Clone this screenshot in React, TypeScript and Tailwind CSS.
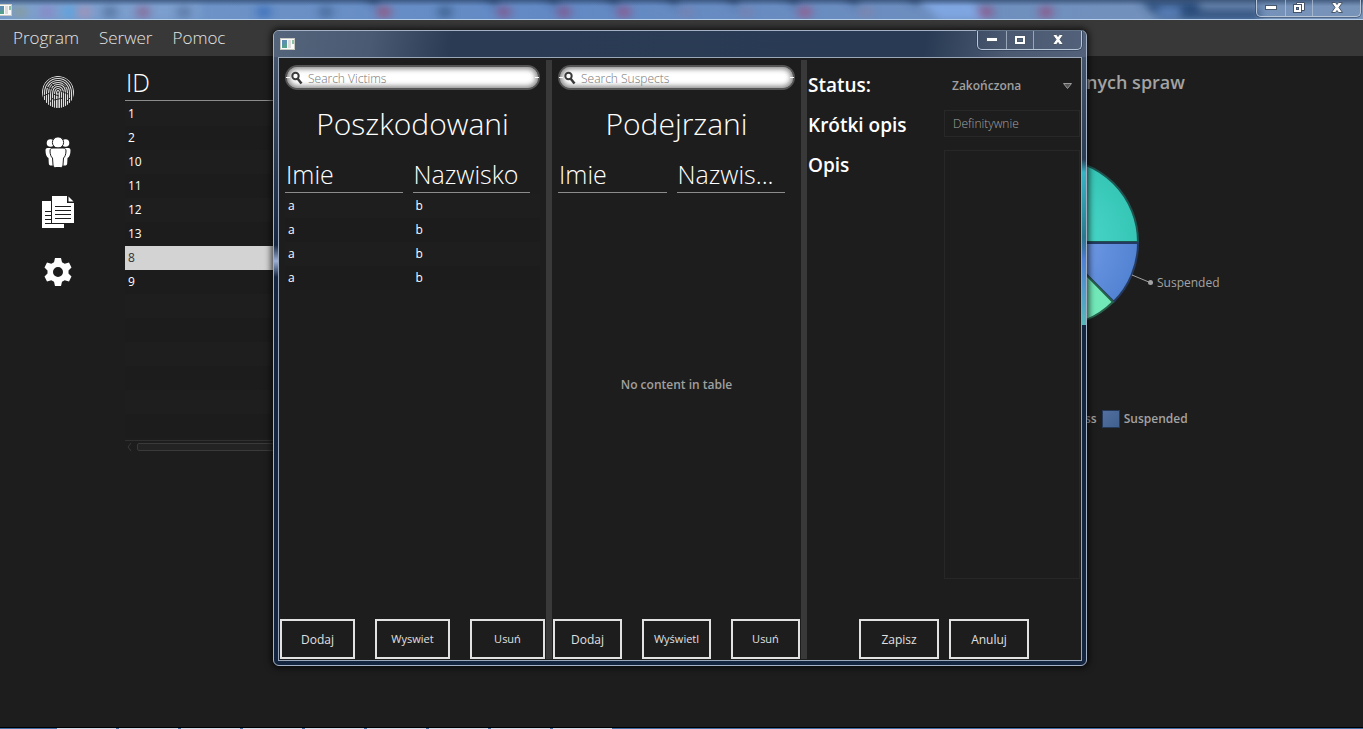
import type { ReactNode } from 'react';

const caseIds = ['1', '2', '10', '11', '12', '13', '8', '9', '', '', '', '', '', ''];
const victims = [
  ['a', 'b'],
  ['a', 'b'],
  ['a', 'b'],
  ['a', 'b'],
];
const tabBlurs = [
  { x: 20, c: '#8a9a8a' }, { x: 47, c: '#8f7fc4' }, { x: 70, c: '#4fa5e6' }, { x: 84, c: '#b08fae' },
  { x: 110, c: '#4c6691' }, { x: 143, c: '#8c5a86' }, { x: 184, c: '#4f6a96' }, { x: 264, c: '#2f66b8' },
  { x: 326, c: '#3f608e' }, { x: 384, c: '#a2466c' }, { x: 445, c: '#31557f' }, { x: 504, c: '#8c4b80' },
  { x: 564, c: '#8c4b80' }, { x: 624, c: '#964b80' }, { x: 686, c: '#7b80ac' }, { x: 746, c: '#7b80ac' },
  { x: 805, c: '#a0507f' }, { x: 866, c: '#8583a8' }, { x: 986, c: '#96477a' }, { x: 1046, c: '#96477a' },
];
const tabEdges = [370, 490, 550, 610, 670, 730, 790, 850, 912];

function AppIcon() {
  return (
    <svg width="15" height="12" viewBox="0 0 15 12" aria-hidden="true">
      <rect x="0.5" y="0.5" width="14" height="11" fill="#fafafa" stroke="#c9c9c4" />
      <rect x="2" y="2" width="5" height="8" fill="#55a08d" />
      <path d="M2 2h5v3L2 8z" fill="#5c8fb0" />
      <rect x="8" y="2" width="3" height="8" fill="#dcdcdc" />
      <rect x="12" y="2" width="2" height="4" fill="#8fc0a8" />
    </svg>
  );
}

function CaptionButtons({ restore }: { restore: boolean }) {
  const base = 'flex items-center justify-center pb-px border-[#b9c6d8]/70 hover:bg-white/20';
  return (
    <div className="flex h-full overflow-hidden rounded-b-[5px] border border-t-0 border-[#b9c6d8] shadow-[0_0_0_1px_#26374f80]">
      <button aria-label="Minimize" className={base + ' w-[29px] border-r'}>
        <svg width="12" height="5" viewBox="0 0 12 5"><rect x="0.5" y="0.5" width="11" height="4" fill="#fff" stroke="#4a586b" /></svg>
      </button>
      <button aria-label={restore ? 'Restore' : 'Maximize'} className={base + ' w-[27px] border-r'}>
        {restore ? (
          <svg width="12" height="12" viewBox="0 0 12 12">
            <path d="M3.500 0.500h8v8h-3v-6h-5z" fill="#fff" stroke="#45536a" />
            <rect x="0.500" y="2.500" width="8" height="8" fill="#fff" stroke="#45536a" />
            <rect x="3.500" y="5.500" width="2" height="2" fill="#7189ac" stroke="#45536a" />
          </svg>
        ) : (
          <svg width="12" height="10" viewBox="0 0 12 10">
            <rect x="0.5" y="0.5" width="11" height="9" fill="#fff" stroke="#4a586b" />
            <rect x="3.5" y="3.5" width="5" height="3" fill="#56667c" stroke="#4a586b" />
          </svg>
        )}
      </button>
      <button aria-label="Close" className={base + ' w-[47px]'}>
        <svg width="12" height="11" viewBox="0 0 12 11">
          <path d="M0.5 0.5h4L6 2.5l1.500-2h4L8 5.500l3.500 5h-4L6 8.500l-1.500 2h-4L4 5.500z" fill="#fff" stroke="#4a586b" />
        </svg>
      </button>
    </div>
  );
}

function FingerprintIcon() {
  return (
    <svg width="34" height="34" viewBox="0 0 34 34" fill="none" stroke="#dcdcdc" strokeWidth="1.1" aria-hidden="true">
      <defs><clipPath id="finger"><circle cx="17" cy="17" r="16" /></clipPath></defs>
      <g clipPath="url(#finger)">
        <path d="M17 1.500C8 1.500 1.500 8 1.500 17v6M17 1.500C26 1.500 32.500 8 32.500 17v6" />
        <path d="M3.500 25v-7C3.500 10 9 3.500 17 3.500S30.500 10 30.500 18v8" />
        <path d="M5.500 28V18C5.500 11 10 5.500 17 5.500S28.500 11 28.500 18v10" />
        <path d="M7.500 30V19C7.500 12 11 7.500 17 7.500S26.500 12 26.500 18v12" />
        <path d="M9.500 32V20C9.500 13 12 9.500 17 9.500S24.500 13 24.500 18v14" />
        <path d="M11.500 33V20c0-5 2-8.500 5.500-8.500s5.500 3 5.500 7.500v14" />
        <path d="M13.500 33V20c0-4 1-6.500 3.500-6.500s3.500 2 3.500 5.500v14" />
        <path d="M15.500 33V19c0-2 .5-3.500 1.500-3.500s1.500 1 1.500 3.500v14" />
        <path d="M17 18v15" />
      </g>
      <path d="M2 21l7-3M8 28l4-5M20 16l7 3M13 25l9-2M25 27l5-5M5 12l6 2M22 8l3 4M10 8l3 3M12 19l6 2" stroke="#1d1d1d" strokeWidth="0.9" />
    </svg>
  );
}

function PeopleIcon() {
  return (
    <svg width="26" height="31" viewBox="0 0 26 31" fill="#fff" aria-hidden="true">
      <circle cx="5.500" cy="6" r="3.800" />
      <circle cx="20.500" cy="6" r="3.800" />
      <path d="M2.500 11h7v17.500H6.500c-2 0-2.500-.5-2.700-2L3.500 21C1.500 20 .5 17 .5 13.500.5 12 1 11 2.500 11zM23.500 11h-7v17.500h3c2 0 2.500-.5 2.700-2l.3-5.500c2-1 3-4 3-7.500 0-1.500-.5-2.500-2-2.500z" />
      <g stroke="#1d1d1d">
        <circle cx="13" cy="5.500" r="5.600" />
        <path d="M8 11h10c2 0 3 1 3 3 0 3-1 6-2.500 7L18 28c-.3 2-1 2.500-2.500 2.500h-5C9 30.500 8.300 30 8 28l-.5-7C6 20 5 17 5 14c0-2 1-3 3-3z" />
      </g>
    </svg>
  );
}

function DocumentsIcon() {
  return (
    <svg width="32" height="32" viewBox="0 0 32 32" aria-hidden="true">
      <path d="M0 5h9v23h13v4H0z" fill="#fff" />
      <path d="M10 0h15v7h7v20H10z" fill="#fff" />
      <path d="M26.500 0.500L31.500 5.500h-5z" fill="#fff" />
      <path d="M13 10.500h16M13 14.500h16M13 18.500h16M13 22.500h16M3 15.500h6M3 19.500h6M3 23.500h6M3 27.500h19" stroke="#1d1d1d" />
    </svg>
  );
}

function GearIcon() {
  return (
    <svg width="28" height="28" viewBox="0 0 28 28" fill="#fff" aria-hidden="true">
      <path fillRule="evenodd" d="M11 0h6l1 4.200 2.700 1.500L25 4.500l2.500 5-3 3v3l3 3-2.500 5-4.300-1.200-2.700 1.500L17 28h-6l-1-4.200-2.700-1.500L3 23.500l-2.500-5 3-3v-3l-3-3 2.500-5 4.300 1.200L10 4.200zM14 9a5 5 0 1 0 0 10 5 5 0 0 0 0-10z" />
    </svg>
  );
}

function SearchBox({ label }: { label: string }) {
  return (
    <label className="relative flex h-[25px] items-center rounded-full border-2 border-[#555] bg-white pl-1 shadow-[inset_0_0_5px_2px_#8a8a8a]">
      <span className="absolute -left-px top-[10px] h-px w-1 bg-white" />
      <span className="absolute -right-px top-[10px] h-px w-1 bg-white" />
      <svg width="12" height="14" viewBox="0 0 12 14" fill="none" stroke="#3a3a3a" aria-hidden="true">
        <circle cx="4.500" cy="5" r="3.200" strokeWidth="2" />
        <path d="M6.500 7.500l4 5" strokeWidth="2.500" />
      </svg>
      <input
        type="search"
        aria-label={label}
        placeholder={label}
        className="ml-[5px] min-w-0 flex-1 bg-transparent pt-[2px] text-[12px] font-light text-[#444] outline-none placeholder:text-[#777]"
      />
    </label>
  );
}

function PeopleTable({ last, rows, empty }: { last: string; rows: string[][]; empty?: string }) {
  return (
    <div className="flex flex-1 flex-col">
      <table className="w-full table-fixed text-left">
        <thead>
          <tr>
            {['Imie', last].map((h) => (
              <th key={h} className="p-0 pb-px pr-[10px] text-[25px] leading-8 font-light">
                <div className="border-b border-[#8c8c8c] pb-[2px] pl-px">{h}</div>
              </th>
            ))}
          </tr>
        </thead>
        <tbody>
          {rows.map((row, i) => (
            <tr key={i} className="h-6 text-[12px] odd:bg-[#1e1e1e] even:bg-[#1c1c1c]">
              {row.map((cell) => (
                <td key={cell} className="p-0 pl-[3px]">{cell}</td>
              ))}
            </tr>
          ))}
        </tbody>
      </table>
      {empty && (
        <p className="flex flex-1 items-center justify-center pb-[18px] text-[12px] font-semibold text-[#a0a0a0]">{empty}</p>
      )}
    </div>
  );
}

function OutlineButton({ small, children }: { small?: boolean; children: ReactNode }) {
  return (
    <button
      className={
        'h-10 w-full border-2 border-[#e2e2e2] text-[#e0e0e0] hover:bg-white/10 ' +
        (small ? 'text-[11px]' : 'pt-[2px] text-[12px]')
      }
    >
      {children}
    </button>
  );
}

function PersonPanel(props: { search: string; title: string; last: string; rows: string[][]; empty?: string; actions: string[] }) {
  return (
    <section className="flex min-w-0 flex-col">
      <div className="flex flex-1 flex-col px-[6px] pt-[7px] pb-[26px]">
        <SearchBox label={props.search} />
        <h2 className="flex h-[68px] items-center justify-center pb-[2px] text-[30px] font-light">{props.title}</h2>
        <PeopleTable last={props.last} rows={props.rows} empty={props.empty} />
      </div>
      <div className="grid grid-cols-3 gap-5 px-px pb-px">
        {props.actions.map((a, i) => <OutlineButton key={a} small={i > 0}>{a}</OutlineButton>)}
      </div>
    </section>
  );
}

function CaseForm() {
  const label = 'pl-px text-[19px] font-semibold leading-10';
  return (
    <section className="flex min-w-0 flex-col pb-px">
      <form className="grid flex-1 grid-cols-[137px_1fr] grid-rows-[40px_40px_1fr] pt-[7px] pr-px pb-10">
        <label htmlFor="status" className={label}>Status:</label>
        <div className="relative flex items-center pt-[2px]">
          <select id="status" className="w-full appearance-none bg-transparent pl-2 text-[12px] font-semibold text-[#a0a0a0] outline-none">
            <option>Zakończona</option>
          </select>
          <svg className="pointer-events-none absolute right-2" width="9" height="6" viewBox="0 0 9 6" aria-hidden="true">
            <path d="M0.500 0.500h8l-4 5z" fill="#555" stroke="#9a9a9a" />
          </svg>
        </div>
        <label htmlFor="short" className={label}>Krótki opis</label>
        <div className="flex items-center pb-[3px]">
          <input id="short" defaultValue="Definitywnie" className="h-[27px] w-full border border-[#282828] bg-transparent pl-2 text-[12px] font-light text-[#a5a5a5] outline-none" />
        </div>
        <label htmlFor="description" className={label}>Opis</label>
        <div className="flex pt-[5px]">
          <textarea id="description" className="w-full resize-none border border-[#272727] bg-transparent p-2 text-[12px] outline-none" />
        </div>
      </form>
      <div className="grid grid-cols-[80px_80px] justify-center gap-[10px]">
        <OutlineButton>Zapisz</OutlineButton>
        <OutlineButton>Anuluj</OutlineButton>
      </div>
    </section>
  );
}

function CaseDialog() {
  return (
    <div
      role="dialog"
      aria-label="Case"
      className="absolute top-[30px] right-[276px] bottom-[63px] left-[273px] flex flex-col rounded-[6px] border border-[#a5b2c5] bg-linear-to-b from-[#4b5b72] via-[#14253f] via-35% to-[#14253f] px-1 pb-1 shadow-[0_0_6px_2px_#000000b0]"
    >
      <span className="absolute top-[214px] left-0 h-8 w-1 bg-linear-to-b from-[#9db0d800] via-[#9db0d8] to-[#9db0d800]" />
      <span className="absolute top-[128px] right-0 h-[166px] w-1 bg-linear-to-b from-[#43b5c600] via-[#35b3c4] via-8% to-[#43b5c600]" />
      <span className="absolute top-[206px] right-0 h-[88px] w-1 bg-linear-to-b from-[#4679d000] via-[#4f7fd6] via-25% to-[#55b8b9]" />
      <header className="-mx-1 flex h-[26px] items-start justify-between rounded-t-[5px] bg-[linear-gradient(100deg,#53647b_0%,#495a72_12%,#2b3b54_22%,#293a54_80%,#4b5a71_90%,#53627a_100%)] pl-[6px] pr-1">
        <span className="pt-[7px]"><AppIcon /></span>
        <div className="h-[19px]"><CaptionButtons restore={false} /></div>
      </header>
      <div className="grid flex-1 grid-cols-[267fr_6px_249fr_6px_274fr] border border-[#9aa7b9] bg-[#1d1d1d]">
        <PersonPanel search="Search Victims" title="Poszkodowani" last="Nazwisko" rows={victims} actions={['Dodaj', 'Wyswiet', 'Usuń']} />
        <div className="mt-[2px] mb-px bg-[#393939]" />
        <PersonPanel search="Search Suspects" title="Podejrzani" last="Nazwis..." rows={[]} empty="No content in table" actions={['Dodaj', 'Wyświetl', 'Usuń']} />
        <div className="mt-[2px] mb-px bg-[#393939]" />
        <CaseForm />
      </div>
    </div>
  );
}

function StatusChart() {
  return (
    <section className="pt-[14px] text-[#a3a3a3]">
      <h2 className="pl-[46px] text-[18px] leading-6 font-semibold">nych spraw</h2>
      <div className="relative mt-14">
        <svg width="120" height="184" viewBox="1040 150 120 184" aria-hidden="true">
          <defs>
            <radialGradient id="teal" gradientUnits="userSpaceOnUse" cx="1055" cy="242" r="83"><stop offset="0.300" stopColor="#48d6c8" /><stop offset="1" stopColor="#36c6b6" /></radialGradient>
            <radialGradient id="blue" gradientUnits="userSpaceOnUse" cx="1055" cy="242" r="83"><stop offset="0.300" stopColor="#7099e6" /><stop offset="1" stopColor="#5283d2" /></radialGradient>
          </defs>
          <path d="M1055 242V159a83 83 0 0 1 83 83z" fill="url(#teal)" stroke="#1d5450" strokeWidth="2" />
          <path d="M1055 243h83a83 83 0 0 1-24.300 58.700z" fill="url(#blue)" stroke="#243a60" strokeWidth="2" />
          <path d="M1055 243l58 59a83 83 0 0 1-58 24z" fill="#72e8b9" stroke="#27604b" strokeWidth="2" />
          <path d="M1132 275l18 7.500" stroke="#a3a3a3" />
          <circle cx="1150.500" cy="282.500" r="2.500" fill="#a3a3a3" />
        </svg>
        <span className="absolute top-[125px] left-[117px] text-[12px] leading-4">Suspended</span>
      </div>
      <div className="mt-[75px] flex items-center pl-[45px] text-[12px] leading-5 font-semibold">
        <span>ss</span>
        <span className="mr-1 ml-[5px] size-[18px] border border-[#24395a] bg-linear-to-br from-[#536f9f] to-[#40608f]" />
        <span>Suspended</span>
      </div>
    </section>
  );
}

export default function App() {
  return (
    <div className="relative flex min-h-screen flex-col overflow-hidden bg-[#1d1d1d] font-['Open_Sans','Noto_Sans',sans-serif] text-white">
      <header className="relative flex h-5 items-start justify-between border-b border-[#b5cfea] bg-linear-to-r from-[#7398c8] via-[#6289c4] via-40% to-[#7893b8] pr-[2px]">
        <svg className="absolute inset-0 h-full w-full" aria-hidden="true">
          <defs>
            <filter id="soft" x="-50%" y="-50%" width="200%" height="200%"><feGaussianBlur stdDeviation="4" /></filter>
            <linearGradient id="shade" x2="0" y2="1"><stop stopColor="#233a5c" stopOpacity="0.600" /><stop offset="0.300" stopColor="#233a5c" stopOpacity="0" /></linearGradient>
          </defs>
          <g filter="url(#soft)">
            <path d="M10 0h190v20H10z" fill="#86a6d4" opacity="0.600" />
            <path d="M920 0h50l20 20H940z" fill="#82a8e6" opacity="0.900" />
            <path d="M1140 0h120v20h-100z" fill="#2c4d7c" />
            <path d="M1158 8h22v8h-22z" fill="#5f88c4" />
            <path d="M1200 0h60v10h-60z" fill="#6280a8" />
            {tabEdges.map((x) => <path key={x} d={`M${x - 8} -4h16v10z`} fill="#2f4a73" />)}
          </g>
          {tabBlurs.map((t) => <ellipse key={t.x} cx={t.x} cy="12" rx="8" ry="6" fill={t.c} opacity="0.700" filter="url(#soft)" />)}
          <rect width="100%" height="20" fill="url(#shade)" />
        </svg>
        <span className="relative -ml-[3px] pt-1"><AppIcon /></span>
        <div className="relative h-[17px]"><CaptionButtons restore /></div>
      </header>
      <nav className="flex h-9 items-center gap-5 bg-[#383838] pl-[13px] text-[17px] font-light text-[#e4e4e4]">
        {['Program', 'Serwer', 'Pomoc'].map((m) => <button key={m}>{m}</button>)}
      </nav>
      <main className="grid flex-1 grid-cols-[125px_915px_1fr]">
        <aside className="flex flex-col pt-[6px] pr-[9px]">
          {[<FingerprintIcon />, <PeopleIcon />, <DocumentsIcon />, <GearIcon />].map((icon, i) => (
            <button key={i} aria-label={['Evidence', 'People', 'Documents', 'Settings'][i]} className="flex h-[60px] items-center justify-center">
              {icon}
            </button>
          ))}
        </aside>
        <section className="pt-[10px]">
          <table className="w-full text-left">
            <thead>
              <tr>
                <th className="p-0 pb-px text-[25px] leading-8 font-light">
                  <div className="border-b border-[#8c8c8c] pb-[2px] pl-px">ID</div>
                </th>
              </tr>
            </thead>
            <tbody>
              {caseIds.map((id, i) => (
                <tr key={i} className={id === '8' ? 'h-6 bg-[#d3d3d3] text-[#333]' : 'h-6 odd:bg-[#1e1e1e] even:bg-[#1c1c1c]'}>
                  <td className="p-0 pl-[3px] text-[12px]">{id}</td>
                </tr>
              ))}
            </tbody>
          </table>
          <div className="mt-[2px] flex items-center border-t border-[#303030] pt-[2px]">
            <svg width="12" height="8" viewBox="0 0 12 8" aria-hidden="true"><path d="M6 0L3 4l3 4" fill="none" stroke="#3a3a3a" /></svg>
            <div className="h-2 flex-1 rounded-xs border border-[#3a3a3a] bg-[#232323]" />
          </div>
        </section>
        <StatusChart />
      </main>
      <footer className="flex h-[2px] gap-[3px] border-t border-black bg-[#3f6ea5] pl-[57px]">
        {[0, 1, 2, 3, 4, 5, 6, 7, 8].map((n) => <span key={n} className="w-[59px] bg-[#cfdbe8]" />)}
      </footer>
      <CaseDialog />
    </div>
  );
}
